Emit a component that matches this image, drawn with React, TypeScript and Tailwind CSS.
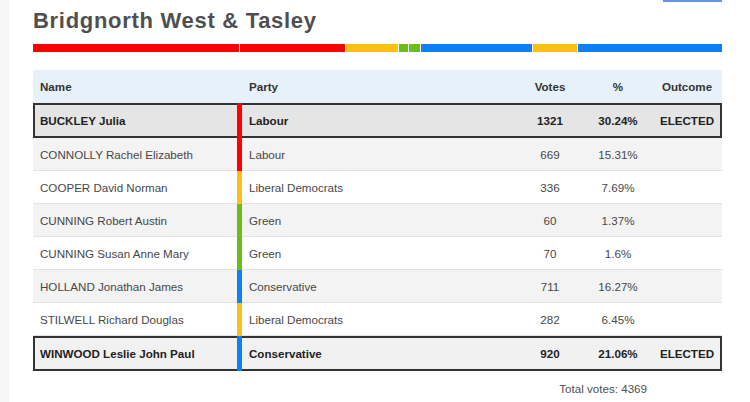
const candidates = [
  { name: 'BUCKLEY Julia', party: 'Labour', colour: '#ff0000', votes: 1321, pct: '30.24%', elected: true, bg: 'bg-[#e5e5e5]' },
  { name: 'CONNOLLY Rachel Elizabeth', party: 'Labour', colour: '#ff0000', votes: 669, pct: '15.31%', elected: false, bg: 'bg-[#f3f3f3]' },
  { name: 'COOPER David Norman', party: 'Liberal Democrats', colour: '#fdbf12', votes: 336, pct: '7.69%', elected: false, bg: 'bg-white' },
  { name: 'CUNNING Robert Austin', party: 'Green', colour: '#67c015', votes: 60, pct: '1.37%', elected: false, bg: 'bg-[#f3f3f3]' },
  { name: 'CUNNING Susan Anne Mary', party: 'Green', colour: '#67c015', votes: 70, pct: '1.6%', elected: false, bg: 'bg-white' },
  { name: 'HOLLAND Jonathan James', party: 'Conservative', colour: '#0d80f6', votes: 711, pct: '16.27%', elected: false, bg: 'bg-[#f3f3f3]' },
  { name: 'STILWELL Richard Douglas', party: 'Liberal Democrats', colour: '#fdbf12', votes: 282, pct: '6.45%', elected: false, bg: 'bg-white' },
  { name: 'WINWOOD Leslie John Paul', party: 'Conservative', colour: '#0d80f6', votes: 920, pct: '21.06%', elected: true, bg: 'bg-[#f1f1f1]' },
];

const total = candidates.reduce((sum, c) => sum + c.votes, 0);

const cols = 'grid grid-cols-[204px_5px_274px_68px_68px_70px]';

export default function App() {
  return (
    <div className="flex min-h-[402px] w-[750px] bg-white font-['Liberation_Sans',Arial,sans-serif] text-[11.6px]">
      {/* faint page gutter on the left */}
      <div className="w-[9px] shrink-0 bg-[#f6f6f6]" />

      <div className="flex w-[713px] flex-col pl-[24px]">
        <div className="flex h-[2px] justify-end">
          <div className="w-[59px] bg-[#6d90d8]" />
        </div>

        <h1 className="mt-[5px] text-[22px] font-bold leading-[28px] tracking-[0.7px] text-[#4f4f4f]">
          Bridgnorth West &amp; Tasley
        </h1>

        {/* share of the vote, one segment per candidate */}
        <div className="mt-[9px] flex h-[8px] w-[689px] gap-px">
          {candidates.map((c) => (
            <div
              key={c.name}
              className="h-full"
              style={{ width: `${(c.votes / total) * 100}%`, backgroundColor: c.colour }}
            />
          ))}
        </div>

        <div className="mt-[18px] w-[689px]">
          <div className={`${cols} h-[33px] items-center bg-[#e7f1fa] font-bold text-[#333]`}>
            <div className="pl-[7px]">Name</div>
            <div />
            <div className="pl-[7px]">Party</div>
            <div className="text-center">Votes</div>
            <div className="text-center">%</div>
            <div className="text-center">Outcome</div>
          </div>

          {candidates.map((c) => (
            <div
              key={c.name}
              className={
                c.elected
                  ? `${cols} h-[35px] ${c.bg} font-bold text-[#222] shadow-[inset_0_0_0_2px_#333]`
                  : `${cols} h-[33px] ${c.bg} border-b border-[#e3e3e3] text-[#474747]`
              }
            >
              <div className="flex items-center pl-[7px]">{c.name}</div>
              <div className={c.elected ? 'h-[35px]' : 'h-[33px]'} style={{ backgroundColor: c.colour }} />
              <div className="flex items-center pl-[7px]">{c.party}</div>
              <div className="flex items-center justify-center">{c.votes}</div>
              <div className="flex items-center justify-center">{c.pct}</div>
              <div className="flex items-center justify-center">{c.elected ? 'ELECTED' : ''}</div>
            </div>
          ))}
        </div>

        <div className="mt-[9px] flex justify-end pr-[75px] text-[#4f4f4f]">Total votes: {total}</div>
      </div>
    </div>
  );
}
